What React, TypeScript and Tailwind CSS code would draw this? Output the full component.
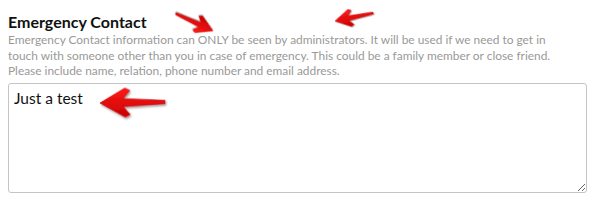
import React from "react";

type ArrowProps = { x: number; y: number; angle: number; scale: number };

const ARROW_POINTS =
  "0,0 25,-14.5 30,-12 23,-4 65,-1.6 65,1.8 23,4 30,12 25,14.5";

function Arrow({ x, y, angle, scale }: ArrowProps) {
  return (
    <g transform={`translate(${x} ${y}) rotate(${angle}) scale(${scale})`}>
      <polygon
        points={ARROW_POINTS}
        fill="url(#arrowGrad)"
        stroke="#c40000"
        strokeWidth={0.6}
        strokeLinejoin="round"
        filter="url(#arrowShadow)"
      />
    </g>
  );
}

export default function App() {
  return (
    <div
      className="relative w-[599px] h-[205px] bg-white overflow-hidden"
      style={{ fontFamily: "Lato, 'Open Sans', sans-serif" }}
    >
      <div className="pl-[8px] pr-[12px] pt-[12px]">
        <h2 className="text-[16px] leading-[20px] font-bold text-[#111]">
          Emergency Contact
        </h2>
        <p className="text-[11.9px] leading-[15.5px] text-[#999] whitespace-nowrap">
          Emergency Contact information can ONLY be seen by administrators. It
          will be used if we need to get in
          <br />
          touch with someone other than you in case of emergency. This could be
          a family member or close friend.
          <br />
          Please include name, relation, phone number and email address.
        </p>
        <textarea
          defaultValue="Just a test"
          className="mt-[4px] block w-[579px] h-[110px] border border-[#c4c4c4] rounded-[3px] px-[5px] py-[4px] text-[15.5px] leading-[20px] text-[#111] outline-none resize-y"
          style={{ fontFamily: "Lato, 'Open Sans', sans-serif" }}
        />
      </div>
      <svg
        className="absolute inset-0 pointer-events-none"
        width={599}
        height={205}
        viewBox="0 0 599 205"
      >
        <defs>
          <linearGradient id="arrowGrad" x1="0" y1="0" x2="0" y2="1">
            <stop offset="0" stopColor="#ff1a1a" />
            <stop offset="1" stopColor="#c80000" />
          </linearGradient>
          <filter id="arrowShadow" x="-20%" y="-50%" width="140%" height="200%">
            <feDropShadow dx="1" dy="1.5" stdDeviation="1" floodColor="#000" floodOpacity="0.45" />
          </filter>
        </defs>
        <Arrow x={213} y={31} angle={-155.3} scale={0.63} />
        <Arrow x={335} y={21} angle={-11.9} scale={0.6} />
        <Arrow x={100} y={103} angle={-1} scale={1} />
      </svg>
    </div>
  );
}
